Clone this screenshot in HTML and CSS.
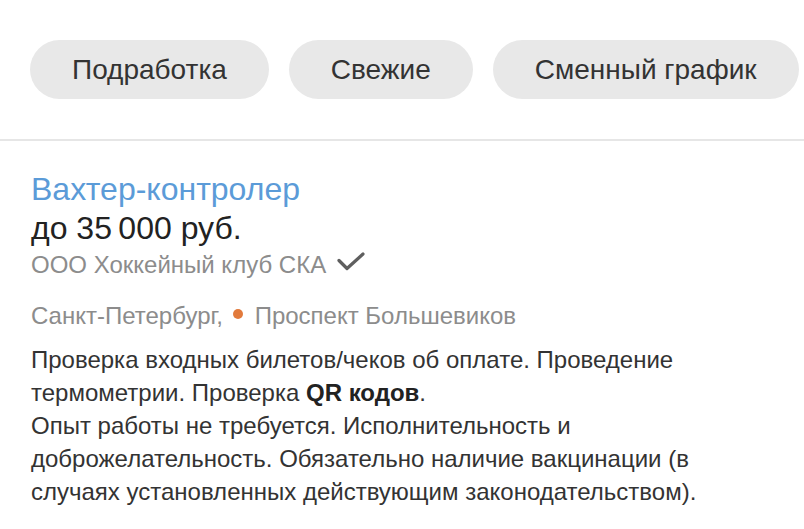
FILE: index.html
```html
<!DOCTYPE html>
<html lang="ru">
<head>
<meta charset="utf-8">
<link rel="stylesheet" href="styles.css">
</head>
<body>
<div class="chips">
  <span class="chip">Подработка</span>
  <span class="chip">Свежие</span>
  <span class="chip">Сменный график</span>
</div>
<div class="divider"></div>
<div class="vacancy">
  <a class="title">Вахтер-контролер</a>
  <div class="salary">до 35&#8201;000 руб.</div>
  <div class="company">ООО Хоккейный клуб СКА
    <svg class="check" width="30" height="20" viewBox="0 0 30 20"><path d="M3 8.5 L11 16.5 L27 2" fill="none" stroke="#5f5f5f" stroke-width="3.2" stroke-linecap="round" stroke-linejoin="round"/></svg>
  </div>
  <div class="address">Санкт-Петербург, <span class="dot"></span>Проспект Большевиков</div>
  <div class="desc">Проверка входных билетов/чеков об оплате. Проведение термометрии. Проверка <b>QR кодов</b>.<br>Опыт работы не требуется. Исполнительность и доброжелательность. Обязательно наличие вакцинации (в случаях установленных действующим законодательством).</div>
</div>
</body>
</html>
```
FILE: styles.css
```css
html, body {
  margin: 0;
  padding: 0;
  background: #fff;
  font-family: "Liberation Sans", Arial, sans-serif;
}
.chips {
  display: flex;
  gap: 20px;
  padding: 40px 30px 40px;
}
.chip {
  display: flex;
  align-items: center;
  height: 59px;
  padding: 0 42px;
  border-radius: 30px;
  background: #e8e8e8;
  color: #333;
  font-size: 28px;
  white-space: nowrap;
}
.divider {
  height: 2px;
  background: #e6e6e6;
}
.vacancy {
  padding: 28px 31px 0;
}
.title {
  display: block;
  color: #5b9bd8;
  font-size: 32px;
  line-height: 40px;
}
.salary {
  color: #222;
  font-size: 32px;
  line-height: 38px;
}
.company {
  display: flex;
  align-items: center;
  gap: 10px;
  color: #8c8c8c;
  font-size: 24px;
  line-height: 36px;
}
.check {
  display: block;
  margin-top: -7px;
}
.address {
  margin-top: 18px;
  color: #8c8c8c;
  font-size: 24px;
  line-height: 30px;
}
.dot {
  display: inline-block;
  width: 10px;
  height: 10px;
  border-radius: 50%;
  background: #e27a3c;
  vertical-align: 5px;
  margin: 0 12px 0 3px;
}
.desc {
  margin-top: 12px;
  color: #333;
  font-size: 24px;
  line-height: 33px;
}
.desc b {
  color: #222;
}
```
